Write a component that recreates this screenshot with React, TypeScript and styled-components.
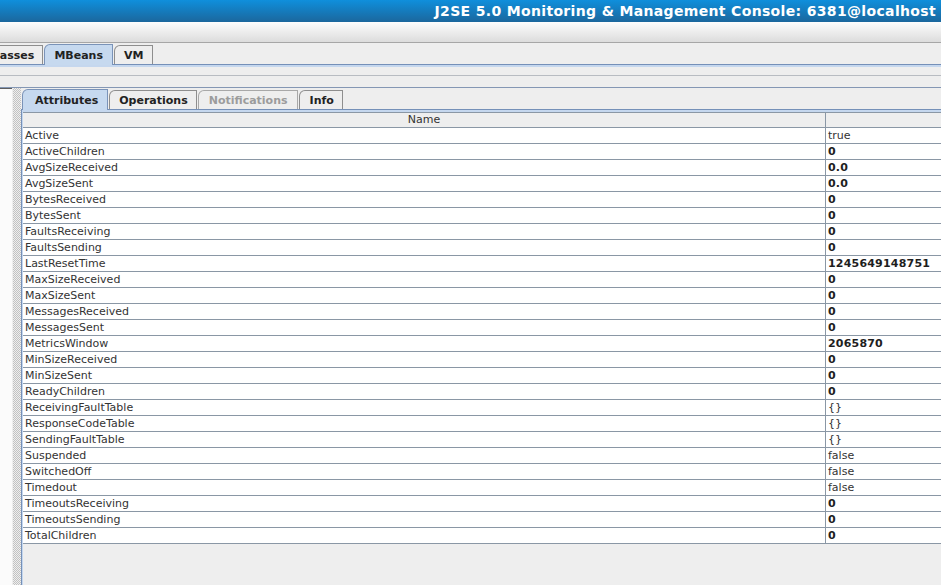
import React from 'react';
import styled, { createGlobalStyle, css } from 'styled-components';

const Global = createGlobalStyle`
  html, body { margin: 0; padding: 0; height: 100%; overflow: hidden; background: #eeeeee; }
  #root { height: 100%; }
`;

const Window = styled.div`
  display: flex;
  flex-direction: column;
  height: 100vh;
  background: #eeeeee;
  font-family: "DejaVu Sans", "Liberation Sans", sans-serif;
  font-size: 11px;
  color: #333333;
`;

const TitleBar = styled.div`
  flex: none;
  height: 22px;
  display: flex;
  align-items: center;
  justify-content: flex-end;
  padding-right: 5px;
  background: linear-gradient(#0f8fdc, #1b679d);
  color: #ffffff;
  font-weight: bold;
  font-size: 14px;
  letter-spacing: 0.34px;
  white-space: nowrap;
`;

const MenuBar = styled.div`
  flex: none;
  height: 20px;
  background: linear-gradient(#fdfdfd, #dcdcdc);
  border-bottom: 1px solid #a6a6a6;
`;

const TabStrip = styled.div<{ $offset?: number }>`
  flex: none;
  height: 21px;
  display: flex;
  align-items: flex-end;
  gap: 1px;
  margin-left: ${(p) => p.$offset ?? 0}px;
  white-space: nowrap;
`;

const Tab = styled.div<{ $selected?: boolean; $disabled?: boolean; $padL?: number; $padR?: number }>`
  height: 19px;
  box-sizing: border-box;
  display: flex;
  align-items: center;
  padding: 0 ${(p) => p.$padR ?? 8}px 0 ${(p) => p.$padL ?? 8}px;
  border: 1px solid #8e8e8e;
  border-bottom: none;
  border-top-left-radius: 6px 6px;
  background: #eeeeee;
  font-weight: bold;
  color: #222222;
  ${(p) =>
    p.$selected &&
    css`
      position: relative;
      z-index: 1;
      height: 21px;
      margin-bottom: -1px;
      background: #c6d9ef;
      border-color: #7a93b8;
    `}
  ${(p) =>
    p.$disabled &&
    css`
      color: #9c9c9c;
      border-color: #a8a8a8;
    `}
`;

const Band = styled.div`
  flex: none;
  height: 23px;
  display: flex;
  flex-direction: column;
  border-top: 1px solid #7590b8;
  box-sizing: border-box;
`;

const BandAccent = styled.div`
  height: 2px;
  background: #c5d7ee;
`;

const BandToolRow = styled.div`
  height: 8px;
  border-bottom: 1px solid #b8bcc2;
`;

const SplitPane = styled.div`
  flex: 1;
  display: flex;
  min-height: 0;
  border-top: 1px solid #8497b4;
`;

const LeftPane = styled.div`
  width: 12px;
  flex: none;
  background: #fbfbfb;
  border-top: 1px solid #5e5e5e;
  box-sizing: border-box;
`;

const Divider = styled.div`
  width: 9px;
  flex: none;
  background: repeating-conic-gradient(#c2c2c2 0 25%, #eeeeee 0 50%) 0 0 / 2px 2px;
  border-left: 1px solid #eeeeee;
  box-sizing: border-box;
`;

const RightPane = styled.div`
  flex: 1;
  display: flex;
  flex-direction: column;
  min-width: 0;
`;

const TabContent = styled.div`
  flex: 1;
  border-top: 1px solid #7590b8;
  border-left: 1px solid #7590b8;
  box-shadow: inset 1px 2px 0 #c5d7ee;
  padding: 2px 0 0 1px;
  display: flex;
  flex-direction: column;
  min-height: 0;
`;

const Grid = styled.div`
  display: grid;
  grid-template-columns: 803px 1fr;
  border-top: 1px solid #8a97a5;
  background: #ffffff;
`;

const HeaderCell = styled.div<{ $last?: boolean }>`
  height: 15px;
  box-sizing: border-box;
  background: #eeeeee;
  border-bottom: 1px solid #8a97a5;
  border-right: ${(p) => (p.$last ? 'none' : '1px solid #8a97a5')};
  text-align: center;
  line-height: 14px;
  color: #333333;
`;

const Cell = styled.div<{ $value?: boolean; $bold?: boolean }>`
  height: 16px;
  box-sizing: border-box;
  border-bottom: 1px solid #8a97a5;
  border-right: ${(p) => (p.$value ? 'none' : '1px solid #8a97a5')};
  padding-left: 2px;
  line-height: 15px;
  white-space: nowrap;
  overflow: hidden;
  color: ${(p) => (p.$bold ? '#1e1e1e' : '#333333')};
  font-weight: ${(p) => (p.$bold ? 'bold' : 'normal')};
  letter-spacing: ${(p) => (p.$bold ? '0.2px' : '0')};
`;

type Row = [string, string, boolean];

const rows: Row[] = [
  ['Active', 'true', false],
  ['ActiveChildren', '0', true],
  ['AvgSizeReceived', '0.0', true],
  ['AvgSizeSent', '0.0', true],
  ['BytesReceived', '0', true],
  ['BytesSent', '0', true],
  ['FaultsReceiving', '0', true],
  ['FaultsSending', '0', true],
  ['LastResetTime', '1245649148751', true],
  ['MaxSizeReceived', '0', true],
  ['MaxSizeSent', '0', true],
  ['MessagesReceived', '0', true],
  ['MessagesSent', '0', true],
  ['MetricsWindow', '2065870', true],
  ['MinSizeReceived', '0', true],
  ['MinSizeSent', '0', true],
  ['ReadyChildren', '0', true],
  ['ReceivingFaultTable', '{}', false],
  ['ResponseCodeTable', '{}', false],
  ['SendingFaultTable', '{}', false],
  ['Suspended', 'false', false],
  ['SwitchedOff', 'false', false],
  ['Timedout', 'false', false],
  ['TimeoutsReceiving', '0', true],
  ['TimeoutsSending', '0', true],
  ['TotalChildren', '0', true],
];

export default function App() {
  return (
    <>
      <Global />
      <Window>
        <TitleBar>J2SE 5.0 Monitoring &amp; Management Console: 6381@localhost</TitleBar>
        <MenuBar />
        <TabStrip $offset={-21}>
          <Tab>Classes</Tab>
          <Tab $selected $padL={9} $padR={9}>MBeans</Tab>
          <Tab $padL={9} $padR={9}>VM</Tab>
        </TabStrip>
        <Band>
          <BandAccent />
          <BandToolRow />
        </Band>
        <SplitPane>
          <LeftPane />
          <Divider />
          <RightPane>
            <TabStrip $offset={1}>
              <Tab $selected $padL={12} $padR={9}>Attributes</Tab>
              <Tab $padL={9} $padR={8}>Operations</Tab>
              <Tab $disabled $padL={10} $padR={9}>Notifications</Tab>
              <Tab $padL={10} $padR={8}>Info</Tab>
            </TabStrip>
            <TabContent>
              <Grid>
                <HeaderCell>Name</HeaderCell>
                <HeaderCell $last />
                {rows.map(([name, value, bold]) => (
                  <React.Fragment key={name}>
                    <Cell>{name}</Cell>
                    <Cell $value $bold={bold}>
                      {value}
                    </Cell>
                  </React.Fragment>
                ))}
              </Grid>
            </TabContent>
          </RightPane>
        </SplitPane>
      </Window>
    </>
  );
}
